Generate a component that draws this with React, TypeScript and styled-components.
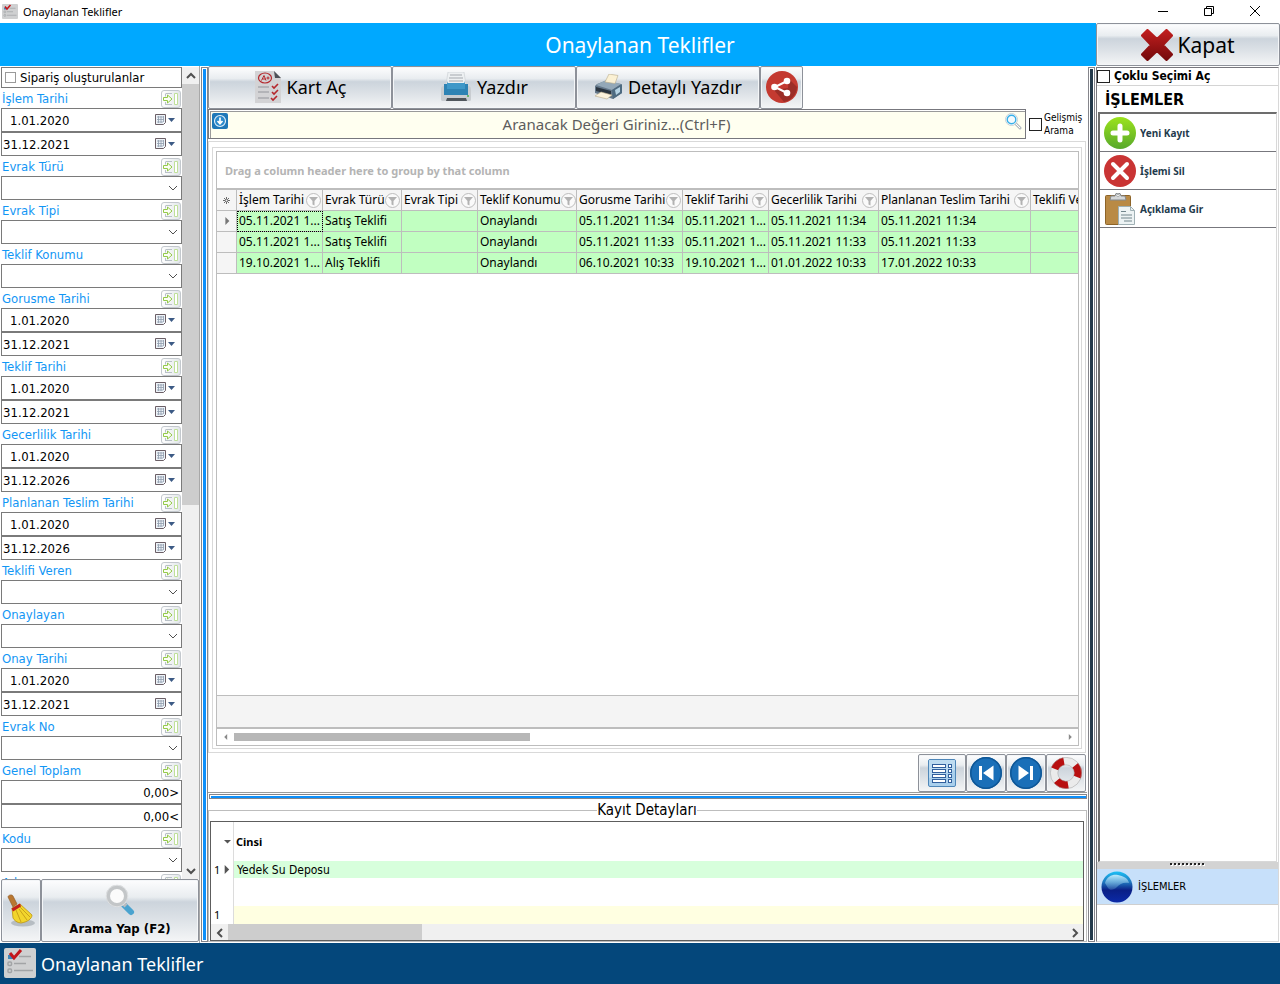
import React from 'react';
import styled, { createGlobalStyle, css } from 'styled-components';

const condensed = '"DejaVu Sans Condensed", "DejaVu Sans", Tahoma, sans-serif';
const noto = '"Noto Sans", "Open Sans", sans-serif';

const GlobalStyle = createGlobalStyle`
  *, *::before, *::after { box-sizing: border-box; }
  body { margin: 0; background: #fff; color: #000; font: 13px/16px ${condensed}; }
  button, input, select { font: inherit; color: inherit; margin: 0; }
  svg { display: block; flex: none; }
`;

const metal = css`
  border: 1px solid #8d9199;
  border-radius: 2px;
  background: linear-gradient(#fdfdfe 0, #e9edf0 28%, #ccd4dc 36%, #dde2e7 65%, #f4f5f6 100%);
  box-shadow: inset 0 0 0 1px #f4f6f8;
`;

/* ---------- shell ---------- */
const Window = styled.div`
  display: flex;
  flex-direction: column;
  height: 100vh;
  overflow: hidden;
`;
const TitleBar = styled.header`
  display: flex;
  align-items: center;
  flex: none;
  height: 23px;
  padding: 0 2px;
  gap: 5px;
  font: 11px/16px ${noto};
`;
const WindowTitle = styled.span`
  flex: 1;
`;
const CaptionRow = styled.div`
  display: flex;
`;
const CaptionButton = styled.button`
  display: grid;
  place-items: center;
  width: 46px;
  height: 20px;
  padding: 0 0 2px;
  border: 0;
  background: none;
`;
const Body = styled.div`
  display: flex;
  flex: 1;
  min-height: 0;
`;
const Left = styled.div`
  display: flex;
  flex-direction: column;
  flex: 1;
  min-width: 0;
`;
const Banner = styled.h1`
  flex: none;
  height: 43px;
  margin: 0;
  padding-left: 184px;
  background: #00a8ff;
  color: #fff;
  text-align: center;
  font: 21px/44px ${noto};
`;
const Columns = styled.div`
  display: flex;
  flex: 1;
  min-height: 0;
  padding-right: 1px;
`;
const StatusBar = styled.footer`
  display: flex;
  align-items: center;
  flex: none;
  gap: 5px;
  height: 41px;
  padding-left: 4px;
  background: #04477b;
  color: #fff;
  font: 18px/24px ${noto};
`;
const Splitter = styled.div<{ $tone: string; $flat?: boolean }>`
  flex: none;
  border: 1px solid #85858b;
  background: ${(p) => p.$tone};
  ${(p) => (p.$flat
    ? 'height: 5px; margin: 1px 0 0 1px; box-shadow: inset 1px 1px 0 #fff;'
    : 'width: 7px; margin: 1px 0 1px 1px; box-shadow: inset 0 0 0 1px #fff;')}
`;

/* ---------- filter column ---------- */
const FilterColumn = styled.aside`
  display: flex;
  flex-direction: column;
  flex: none;
  width: 200px;
  padding-top: 1px;
  border-right: 1px solid #a8a8a8;
`;
const FilterArea = styled.div`
  display: flex;
  flex: 1;
  min-height: 0;
`;
const FilterList = styled.div`
  flex: 1;
  min-width: 0;
  padding-left: 1px;
  overflow: hidden;
`;
const CheckLine = styled.label`
  display: flex;
  align-items: center;
  gap: 4px;
  height: 21px;
  padding-left: 3px;
  border: 1px solid #7a7a7a;
`;
const Tick = styled.input<{ $size: number; $edge: string }>`
  appearance: none;
  flex: none;
  width: ${(p) => p.$size}px;
  height: ${(p) => p.$size}px;
  border: 1px solid ${(p) => p.$edge};
  background: #fff;
`;
const FilterHead = styled.div`
  display: flex;
  align-items: center;
  justify-content: space-between;
  height: 20px;
  padding: 1px 1px 0;
  color: #1296f5;
`;
const ApplyButton = styled.button`
  width: 20px;
  height: 18px;
  padding: 0;
  border: 1px solid #c3c8cd;
  border-radius: 3px;
  background: linear-gradient(90deg, #fff, #e3e7ea);
`;
const FieldBox = styled.div`
  display: grid;
  grid-template-columns: minmax(0, 1fr) auto;
  align-items: center;
  height: 24px;
  border: 1px solid #7a7a7a;
  background: #fff;
`;
const FieldInput = styled.input<{ $indent?: boolean; $right?: boolean }>`
  grid-area: 1 / 1;
  width: 100%;
  height: 22px;
  padding: 0 2px 0 ${(p) => (p.$indent ? 8 : 1)}px;
  border: 0;
  outline: 0;
  background: none;
  text-align: ${(p) => (p.$right ? 'right' : 'left')};
`;
const PlainButton = styled.button`
  display: flex;
  padding: 0;
  border: 0;
  background: none;
`;
const CalendarButton = styled(PlainButton)`
  padding-right: 5px;
`;
const FieldSelect = styled.select`
  grid-area: 1 / 1 / 2 / 3;
  appearance: none;
  width: 100%;
  height: 22px;
  border: 0;
  outline: 0;
  background: none;
`;
const SelectArrow = styled.span`
  grid-area: 1 / 2;
  padding-right: 3px;
  pointer-events: none;
`;
const ScrollTrack = styled.div`
  display: flex;
  flex-direction: column;
  flex: none;
  width: 17px;
  background: #f0f0f0;
`;
const ScrollThumb = styled.div`
  flex: 0 1 421px;
  background: #cdcdcd;
`;
const ScrollArrow = styled.button`
  display: grid;
  place-items: center;
  flex: none;
  width: 17px;
  height: 17px;
  padding: 0;
  border: 0;
  background: none;
`;
const ScrollRest = styled.div`
  flex: 1;
`;
const SearchActions = styled.div`
  display: flex;
  flex: none;
  height: 64px;
  padding: 0 0 1px 1px;
`;
const ClearButton = styled.button`
  ${metal}
  display: grid;
  place-items: center;
  width: 40px;
  padding: 0;
`;
const RunButton = styled.button`
  ${metal}
  display: flex;
  flex-direction: column;
  align-items: center;
  justify-content: space-between;
  flex: 1;
  padding: 4px 0;
  font-weight: bold;
`;

/* ---------- centre ---------- */
const Centre = styled.main`
  display: flex;
  flex-direction: column;
  flex: 1;
  min-width: 0;
`;
const Toolbar = styled.div`
  display: flex;
  flex: none;
  height: 43px;
`;
const ToolButton = styled.button<{ $width: number }>`
  ${metal}
  display: flex;
  align-items: center;
  justify-content: center;
  gap: 5px;
  width: ${(p) => p.$width}px;
  padding: 0 0 2px;
  font: 18px/24px ${noto};
`;
const SearchRow = styled.div`
  display: flex;
  align-items: center;
  flex: none;
  height: 30px;
  padding-right: 5px;
`;
const SearchBox = styled.div`
  display: flex;
  align-items: flex-start;
  flex: 1;
  height: 30px;
  padding: 3px;
  border: 1px solid #77777d;
  background: #fffff0;
  box-shadow: inset 1px 1px 0 #fff, inset 2px 2px 0 #9a9a9a;
`;
const SearchInput = styled.input`
  flex: 1;
  min-width: 0;
  height: 22px;
  padding: 0;
  border: 0;
  outline: 0;
  background: none;
  text-align: center;
  font: 15px/22px ${noto};
  &::placeholder { color: #5d5d5d; opacity: 1; }
`;
const AdvancedLabel = styled.label`
  display: flex;
  align-items: center;
  gap: 2px;
  width: 56px;
  padding-left: 3px;
  font: 10px/13px ${condensed};
`;
const OuterFrame = styled.section`
  display: flex;
  flex: 1;
  min-height: 0;
  margin: 2px 1px 0 0;
  padding: 5px 3px 3px;
  border: 1px solid #d9d9d9;
`;
const InnerFrame = styled.div`
  display: flex;
  flex: 1;
  min-width: 0;
  padding: 3px 2px 2px 3px;
  border: 1px solid #d9d9d9;
`;
const GridFrame = styled.div`
  display: flex;
  flex-direction: column;
  flex: 1;
  min-width: 0;
  overflow: hidden;
  border: 1px solid #bdbdbd;
`;
const GroupPanel = styled.div`
  flex: none;
  height: 37px;
  padding-left: 8px;
  border-bottom: 1px solid #bdbdbd;
  color: #b4b4b4;
  font: bold 11px/38px ${noto};
`;
const GridBody = styled.div`
  flex: 1;
  min-height: 0;
  overflow: hidden;
`;
const OfferTable = styled.table`
  width: 924px;
  table-layout: fixed;
  border-spacing: 0;
  border-top: 1px solid #bdbdbd;
  font: 12px/20px ${noto};
  white-space: nowrap;
`;
const OfferHead = styled.th`
  height: 21px;
  padding: 0 1px 0 2px;
  overflow: hidden;
  border-right: 1px solid #bdbdbd;
  border-bottom: 1px solid #bdbdbd;
  background: #f5f5f5;
  font-weight: normal;
  text-align: left;
`;
const HeadInner = styled.div`
  display: flex;
  align-items: center;
  justify-content: space-between;
`;
const OfferCell = styled.td<{ $focus?: boolean }>`
  height: 21px;
  padding: 0 0 0 2px;
  overflow: hidden;
  border-right: 1px solid #bdbdbd;
  border-bottom: 1px solid #bdbdbd;
  background: #c1ffc1;
  ${(p) => p.$focus && 'outline: 1px dotted #000; outline-offset: -1px;'}
`;
const RowMark = styled.td`
  height: 21px;
  padding: 0 0 0 6px;
  border-right: 1px solid #bdbdbd;
  border-bottom: 1px solid #bdbdbd;
  background: #f5f5f5;
`;
const MarkHead = styled(OfferHead)`
  padding: 0 0 0 5px;
`;
const SummaryBand = styled.div`
  flex: none;
  height: 33px;
  border-top: 1px solid #bdbdbd;
  border-bottom: 1px solid #bdbdbd;
  background: #f4f4f4;
`;
const GridScroll = styled.div`
  display: flex;
  align-items: center;
  flex: none;
  height: 17px;
  border-top: 1px solid #bdbdbd;
`;
const GridThumb = styled.div`
  width: 296px;
  height: 8px;
  background: #b7b7b7;
`;
const NavRow = styled.nav`
  display: flex;
  justify-content: flex-end;
  flex: none;
  height: 40px;
  padding: 1px 1px 0 0;
  border-bottom: 1px solid #9b9b9b;
`;
const NavButton = styled.button<{ $width: number }>`
  ${metal}
  display: grid;
  place-items: center;
  width: ${(p) => p.$width}px;
  height: 38px;
  padding: 0;
`;
const Details = styled.fieldset`
  flex: none;
  min-width: 0;
  margin: 1px 0 1px;
  padding: 1px 2px 0 1px;
  border: 1px solid #bdbdbd;
`;
const DetailsTitle = styled.legend`
  margin: 0 auto;
  padding: 0;
  font-size: 15px;
  line-height: 20px;
`;
const DetailFrame = styled.div`
  height: 120px;
  border: 1px solid #5d5d5d;
`;
const DetailTable = styled.table`
  width: 100%;
  table-layout: fixed;
  border-spacing: 0;
  font-size: 12px;
  line-height: 16px;
`;
const DetailRow = styled.tr<{ $height: number; $fill?: string }>`
  height: ${(p) => p.$height}px;
  > td:last-child { background: ${(p) => p.$fill || '#fff'}; }
`;
const DetailMark = styled.td`
  padding: 0 2px 0 3px;
  border-right: 1px solid #dcdcdc;
  font: 11px/16px ${noto};
`;
const MarkInner = styled.div`
  display: flex;
  align-items: center;
  justify-content: space-between;
`;
const DetailHead = styled.th`
  padding: 0 2px;
  text-align: left;
  font: bold 11px/16px ${noto};
`;
const DetailCell = styled.td`
  padding: 0 3px;
`;
const DetailScroll = styled.div`
  display: flex;
  height: 16px;
  background: #f0f0f0;
`;
const DetailThumb = styled.div`
  width: 194px;
  background: #cdcdcd;
`;

/* ---------- operations panel ---------- */
const Right = styled.aside`
  display: flex;
  flex-direction: column;
  flex: none;
  width: 184px;
`;
const CloseButton = styled.button`
  ${metal}
  display: flex;
  align-items: center;
  justify-content: center;
  gap: 4px;
  flex: none;
  height: 43px;
  padding: 0;
  font: 21px/28px ${noto};
`;
const Panel = styled.div`
  display: flex;
  flex-direction: column;
  flex: 1;
  min-height: 0;
  margin: 1px 1px 1px 0;
  border: 1px solid #d8d8d8;
  border-top-color: #77777d;
  border-left: 1px solid #77777d;
`;
const MultiSelect = styled.label`
  display: flex;
  align-items: center;
  gap: 4px;
  flex: none;
  height: 17px;
  font: bold 12px/17px ${condensed};
`;
const PanelTitle = styled.h2`
  flex: none;
  height: 27px;
  margin: 0;
  padding-left: 8px;
  border-top: 1px solid #d4d4d4;
  font: bold 16px/27px ${condensed};
`;
const Operations = styled.ul`
  flex: 1;
  min-height: 0;
  margin: 0 1px 0 1px;
  padding: 0;
  border: 1px solid #d8d8d8;
  border-top: 2px solid #6d6d6d;
  border-left: 2px solid #6d6d6d;
  list-style: none;
`;
const Operation = styled.li`
  height: 38px;
  border-bottom: 1px solid #77777d;
`;
const OperationButton = styled.button`
  display: flex;
  align-items: center;
  gap: 4px;
  width: 100%;
  height: 37px;
  padding: 0 4px;
  border: 0;
  background: none;
  color: #1f3b4d;
  font: bold 10px/16px ${noto};
`;
const Grip = styled.div`
  display: grid;
  justify-content: center;
  flex: none;
  height: 7px;
  background: #d3d3d3;
`;
const GroupButton = styled.button`
  display: flex;
  align-items: center;
  gap: 5px;
  flex: none;
  height: 36px;
  padding: 0 4px;
  border: 0;
  border-bottom: 1px solid #cfcfcf;
  background: #c7e0fa;
  font: 11px/16px ${condensed};
`;
const PanelRest = styled.div`
  flex: none;
  height: 36px;
`;

/* ---------- drawings ---------- */
const ListIcon = ({ size }: { size: number }) => (
  <svg width={size} height={size} viewBox="0 0 32 32">
    <rect width="32" height="30" rx="2" fill="#cfd0d1" />
    <path d="M4 7h5v4H4z" fill="#3f86b8" />
    <g fill="none" stroke="#a2a4a6" strokeWidth="1.500">
      <path d="M15 8.500h12M10 15.500h12M10 22.500h19" />
      <rect x="4" y="14" width="3.500" height="3.500" rx="1" /><rect x="4" y="21" width="3.500" height="3.500" rx="1" />
    </g>
    <path d="M6 5l4 5 7-8" fill="none" stroke="#c4161c" strokeWidth="3" />
  </svg>
);
const ApplyIcon = () => (
  <svg width="18" height="16" viewBox="0 0 18 16">
    <path d="M4 2.500h6M4 13.500h6M3.500 2.500v3M3.500 11v3" stroke="#b9c1c7" fill="none" />
    <path d="M1.500 6.500h4V4L10 8l-4.500 4V9.500h-4z" fill="#fbfef4" stroke="#94c94a" />
    <path d="M12.500 2.500h3v11h-3z" fill="#fff" stroke="#bfe09a" />
  </svg>
);
const CalendarIcon = () => (
  <svg width="22" height="14" viewBox="0 0 22 14">
    <path d="M1.500 1.500h10v8l-2 2h-8z" fill="#eef3f8" stroke="#6b5f66" />
    <path d="M3 4h7M3 6.500h7M3 9h6M4.500 3v7M7 3v7M9.500 3v6" stroke="#8f9dad" strokeWidth=".8" />
    <path d="M14 5h7l-3.500 4z" fill="#3c5a85" />
  </svg>
);
const Chevron = ({ dir, size = 10, width = 1 }: { dir: 'up' | 'down' | 'left' | 'right'; size?: number; width?: number }) => {
  const d = { up: 'M1 7l4-4 4 4', down: 'M1 3l4 4 4-4', left: 'M7 1L3 5l4 4', right: 'M3 1l4 4-4 4' }[dir];
  return <svg width={size} height={size} viewBox="0 0 10 10"><path d={d} fill="none" stroke="#505050" strokeWidth={width} /></svg>;
};
const Triangle = ({ dir, color, size }: { dir: 'left' | 'right' | 'down'; color: string; size: number }) => {
  const d = { left: 'M7 0v10L2 5z', right: 'M3 0v10l5-5z', down: 'M0 3h10L5 8z' }[dir];
  return <svg width={size} height={size} viewBox="0 0 10 10"><path d={d} fill={color} /></svg>;
};
const FunnelIcon = () => (
  <svg width="15" height="15" viewBox="0 0 15 15">
    <circle cx="7.500" cy="7.500" r="7" fill="#fafafa" stroke="#bcbcbc" />
    <path d="M3 4h9L8.500 8v4.500l-2-1V8z" fill="#b2b2b2" />
  </svg>
);
const StarIcon = () => (
  <svg width="9" height="9" viewBox="0 0 9 9">
    <path d="M4.500 1v7M1 4.500h7M2 2l5 5M7 2L2 7" stroke="#6a6a6a" strokeWidth="1" />
    <circle cx="4.500" cy="4.500" r="1" fill="#f5f5f5" />
  </svg>
);
const BroomIcon = () => (
  <svg width="30" height="34" viewBox="0 0 30 34">
    <ellipse cx="17" cy="29" rx="12" ry="3.500" fill="#9aa1a8" opacity=".6" />
    <path d="M2 3c0-2 4-3 5-1l4 8-4 3z" fill="#b97731" stroke="#8a5420" strokeWidth=".6" />
    <path d="M6 14l8-4 12 11c0 4-5 7-11 8-4 0-7-3-8-5z" fill="#f2d52c" stroke="#bd9612" strokeWidth=".8" />
    <path d="M10 16l5 12M13 15l8 11M14 13l10 10" stroke="#c9a21a" fill="none" />
    <path d="M5.500 14.500l8.500-5 1 3-8 5z" fill="#c1201c" />
  </svg>
);
const MagnifierIcon = () => (
  <svg width="32" height="33" viewBox="0 0 32 33">
    <path d="M19 20l8 8" stroke="#4aa3cf" strokeWidth="6" strokeLinecap="round" />
    <path d="M18 18l4 4" stroke="#b8bcc0" strokeWidth="4" />
    <circle cx="13" cy="12" r="9" fill="#fbfbfb" stroke="#c3c6c8" strokeWidth="4" />
    <circle cx="13" cy="12" r="10.800" fill="none" stroke="#dfe1e3" strokeWidth="1" />
  </svg>
);
const GradeIcon = () => (
  <svg width="28" height="32" viewBox="0 0 28 32">
    <path d="M1 0h19l7 7v25H1z" fill="#d3d3d5" />
    <path d="M20 0l7 7h-6z" fill="#4d5157" />
    <ellipse cx="11" cy="7" rx="6.500" ry="5" fill="none" stroke="#b5272c" strokeWidth="1.200" />
    <path d="M7.500 9.500L10 4.500l2 5M8.500 8h3M12.500 7h3M14 5.500v3" stroke="#b5272c" fill="none" />
    <path d="M4 16h11M4 21h11M4 27h11" stroke="#a9abae" strokeWidth="1.400" />
    <path d="M18 15l2 2 4-4M18 21l2 2 4-4M17 27l2 2 4-4" stroke="#b5272c" strokeWidth="1.600" fill="none" />
  </svg>
);
const PrinterIcon = () => (
  <svg width="32" height="30" viewBox="0 0 32 30">
    <path d="M8 0h16l2 13H6z" fill="#edf0f2" stroke="#c8ccd0" strokeWidth=".6" />
    <path d="M10 3h12M9 6h14M9 9h14" stroke="#a3a8ad" strokeWidth="1.200" />
    <path d="M4 12h3l1-3v8h16V9l1 3h3v11H4z" fill="#2e83b4" />
    <path d="M7 11h18v6H7z" fill="#3f98c8" />
    <path d="M1 17c0-2 1-3 3-3v9h24v-9c2 0 3 1 3 3v10c0 2-1 2-2 2H3c-1 0-2 0-2-2z" fill="#c9cdd1" />
    <path d="M7 26h19l1 3H6z" fill="#50565c" /><circle cx="28" cy="24" r="1" fill="#4caf50" />
  </svg>
);
const DetailPrinterIcon = () => (
  <svg width="29" height="26" viewBox="0 0 29 26">
    <path d="M1 12l2-2 8-3 16 3 1 2v7l-9 6-18-6z" fill="#64788a" />
    <path d="M2 11l10-5 15 4-9 6z" fill="#93a8b8" />
    <path d="M11 8l4-8 9 1.500-3 8z" fill="#fbf1d4" stroke="#b8ab8a" strokeWidth=".6" />
    <path d="M18 16l10-6v9l-9 6z" fill="#4d6a80" /><path d="M21 16l5-3v5l-4 3z" fill="#b5d3e4" />
    <path d="M2 13l15 4v4L2 17z" fill="#2b3540" />
    <path d="M7 18l11 3-5 4-12-3z" fill="#fdf3dc" stroke="#b8ab8a" strokeWidth=".6" />
  </svg>
);
const ShareIcon = () => (
  <svg width="32" height="32" viewBox="0 0 32 32">
    <circle cx="16" cy="16" r="16" fill="#c43a31" />
    <path d="M23 8l8 8a16 16 0 0 1-13 15L8 19l14-2z" fill="#9c2d27" />
    <path d="M21 10L9 16l12 6" fill="none" stroke="#fff" strokeWidth="2" />
    <g fill="#fff"><circle cx="21" cy="10" r="3.300" /><circle cx="8.500" cy="16" r="3.300" /><circle cx="21" cy="22" r="3.300" /></g>
  </svg>
);
const DownloadIcon = () => (
  <svg width="16" height="16" viewBox="0 0 16 16">
    <rect width="16" height="16" rx="2" fill="#1f78b8" />
    <circle cx="8" cy="8" r="5.500" fill="#2b8acb" stroke="#e8f3fb" strokeWidth="1.100" />
    <path d="M8 4.500v6M5.500 8L8 10.700 10.500 8" fill="none" stroke="#fff" strokeWidth="1.700" />
  </svg>
);
const FindIcon = () => (
  <svg width="17" height="17" viewBox="0 0 17 17">
    <path d="M10.500 10.500l4.500 4.500" stroke="#b4bcc2" strokeWidth="3" strokeLinecap="round" />
    <path d="M11 11l4 4" stroke="#fff" strokeWidth="1" />
    <circle cx="6.500" cy="6.500" r="6" fill="#fff" stroke="#c8d0d5" strokeWidth="1" />
    <circle cx="6.500" cy="6.500" r="4.300" fill="#f2fafe" stroke="#37b0e8" strokeWidth="1.400" />
  </svg>
);
const FormIcon = () => (
  <svg width="30" height="30" viewBox="0 0 30 30">
    <rect x="1.500" y="1.500" width="27" height="27" rx="1.500" fill="#a9cfec" stroke="#4e86b8" />
    <path d="M2 2h26v10L2 20z" fill="#c8e1f3" opacity=".7" />
    <g fill="#fff" stroke="#315f9d" strokeWidth="1">
      {[6.5, 11.5, 16.5, 21.5].map((y) => <React.Fragment key={y}><rect x="5.500" y={y} width="13" height="3" /><rect x="21.500" y={y} width="3" height="3" /></React.Fragment>)}
    </g>
  </svg>
);
const SkipIcon = ({ forward }: { forward?: boolean }) => (
  <svg width="32" height="32" viewBox="1 1 32 32">
    <circle cx="17" cy="17" r="16" fill="#1a6fb8" /><circle cx="17" cy="17" r="15.200" fill="none" stroke="#0f5796" strokeWidth="1.500" />
    {forward
      ? <path d="M9.500 9.500v15L20 17zM21 10h3v14h-3z" fill="#fff" />
      : <path d="M24.500 9.500v15L14 17zM10 10h3v14h-3z" fill="#fff" />}
  </svg>
);
const LifebuoyIcon = () => (
  <svg width="32" height="32" viewBox="1 1 32 32">
    <circle cx="17" cy="17" r="12" fill="none" stroke="#ebebeb" strokeWidth="7.500" />
    <circle cx="17" cy="17" r="12" fill="none" stroke="#b80f10" strokeWidth="7.500" pathLength="6" strokeDasharray="1 1" transform="rotate(-40 17 17)" />
    <circle cx="17" cy="17" r="15.700" fill="none" stroke="#a0a0a0" strokeWidth=".5" />
    <circle cx="17" cy="17" r="8.200" fill="none" stroke="#a0a0a0" strokeWidth=".5" />
  </svg>
);
const CrossIcon = () => (
  <svg width="32" height="32" viewBox="0 0 32 32">
    <defs><linearGradient id="cross" x1="0" y1="0" x2="0" y2="1"><stop offset="0" stopColor="#c01e1e" /><stop offset="1" stopColor="#760a0c" /></linearGradient></defs>
    <path d="M6.500 1.500L16 10.500l9.500-9 5 5L21.500 16l9 9.500-5 5-9.500-9-9.500 9-5-5 9-9.500-9-9.500z" fill="url(#cross)" stroke="url(#cross)" strokeWidth="3" strokeLinejoin="round" />
  </svg>
);
const AddIcon = () => (
  <svg width="32" height="32" viewBox="0 0 32 32">
    <defs><linearGradient id="add" x1="0" y1="0" x2="0" y2="1"><stop offset="0" stopColor="#9be31c" /><stop offset="1" stopColor="#58a82c" /></linearGradient></defs>
    <circle cx="16" cy="16" r="16" fill="url(#add)" />
    <path d="M16 9v14M9 16h14" stroke="#fff" strokeWidth="5" strokeLinecap="round" />
  </svg>
);
const DeleteIcon = () => (
  <svg width="32" height="32" viewBox="0 0 32 32">
    <circle cx="16" cy="16" r="16" fill="#c93434" />
    <path d="M9 9l14 14M23 9L9 23" stroke="#fff" strokeWidth="4" strokeLinecap="round" />
  </svg>
);
const ClipboardIcon = () => (
  <svg width="32" height="32" viewBox="0 0 32 32">
    <rect x="1.500" y="2.500" width="25" height="29" rx="1" fill="#b98a45" stroke="#8d6429" />
    <path d="M7 3h4a3 3 0 0 1 6 0h4l1 4H6z" fill="#d4d7d9" stroke="#85898c" /><circle cx="14" cy="2.500" r="1.200" fill="#fff" stroke="#85898c" strokeWidth=".6" />
    <path d="M14.500 13.500h12l4 4v14h-16z" fill="#edf3f4" stroke="#9fb0b4" />
    <path d="M26.500 13.500v4h4" fill="none" stroke="#9fb0b4" />
    <path d="M17 18.500h5M17 22h11M17 25h11M20 28h8" stroke="#72868c" />
  </svg>
);
const BallIcon = () => (
  <svg width="32" height="32" viewBox="0 0 32 32">
    <defs>
      <linearGradient id="ball" x1="0" y1="0" x2="0" y2="1"><stop offset="0" stopColor="#1bc0f5" /><stop offset=".35" stopColor="#1f74bd" /><stop offset=".6" stopColor="#0a1f86" /><stop offset="1" stopColor="#0b2aa8" /></linearGradient>
      <linearGradient id="shine" x1="0" y1="0" x2="0" y2="1"><stop offset="0" stopColor="#d9f4ff" stopOpacity=".85" /><stop offset="1" stopColor="#6fb5e0" stopOpacity=".25" /></linearGradient>
    </defs>
    <circle cx="16" cy="16" r="15.500" fill="url(#ball)" />
    <path d="M4 12C6 5 12 3 17 4s10 3 11 8c-6-1-9 1-12 4s-7 4-9 1z" fill="url(#shine)" />
  </svg>
);
const GripDots = () => (
  <svg width="36" height="4" viewBox="0 0 36 4">
    {[0, 4, 8, 12, 16, 20, 24, 28, 32].map((x) => <g key={x}><rect x={x + 1} y="2" width="2" height="2" fill="#fff" /><rect x={x} y="1" width="2" height="2" fill="#222" /></g>)}
  </svg>
);

/* ---------- data ---------- */
type Filter = { name: string; kind: 'date' | 'select' | 'amount'; values?: string[] };
const filters: Filter[] = [
  { name: 'İşlem Tarihi', kind: 'date', values: ['1.01.2020', '31.12.2021'] },
  { name: 'Evrak Türü', kind: 'select' },
  { name: 'Evrak Tipi', kind: 'select' },
  { name: 'Teklif Konumu', kind: 'select' },
  { name: 'Gorusme Tarihi', kind: 'date', values: ['1.01.2020', '31.12.2021'] },
  { name: 'Teklif Tarihi', kind: 'date', values: ['1.01.2020', '31.12.2021'] },
  { name: 'Gecerlilik Tarihi', kind: 'date', values: ['1.01.2020', '31.12.2026'] },
  { name: 'Planlanan Teslim Tarihi', kind: 'date', values: ['1.01.2020', '31.12.2026'] },
  { name: 'Teklifi Veren', kind: 'select' },
  { name: 'Onaylayan', kind: 'select' },
  { name: 'Onay Tarihi', kind: 'date', values: ['1.01.2020', '31.12.2021'] },
  { name: 'Evrak No', kind: 'select' },
  { name: 'Genel Toplam', kind: 'amount', values: ['0,00>', '0,00<'] },
  { name: 'Kodu', kind: 'select' },
  { name: 'Adı', kind: 'select' },
];
const columns: [string, number][] = [
  ['İşlem Tarihi', 86], ['Evrak Türü', 79], ['Evrak Tipi', 76], ['Teklif Konumu', 99], ['Gorusme Tarihi', 106],
  ['Teklif Tarihi', 86], ['Gecerlilik Tarihi', 110], ['Planlanan Teslim Tarihi', 152], ['Teklifi Veren', 110],
];
const offers = [
  ['05.11.2021 1...', 'Satış Teklifi', '', 'Onaylandı', '05.11.2021 11:34', '05.11.2021 1...', '05.11.2021 11:34', '05.11.2021 11:34', ''],
  ['05.11.2021 1...', 'Satış Teklifi', '', 'Onaylandı', '05.11.2021 11:33', '05.11.2021 1...', '05.11.2021 11:33', '05.11.2021 11:33', ''],
  ['19.10.2021 1...', 'Alış Teklifi', '', 'Onaylandı', '06.10.2021 10:33', '19.10.2021 1...', '01.01.2022 10:33', '17.01.2022 10:33', ''],
];

const FilterGroup = ({ name, kind, values = [] }: Filter) => (
  <div>
    <FilterHead>
      <label htmlFor={`${name}-0`}>{name}</label>
      <ApplyButton aria-label={`${name} uygula`}><ApplyIcon /></ApplyButton>
    </FilterHead>
    {kind === 'select' && (
      <FieldBox>
        <FieldSelect id={`${name}-0`}><option /></FieldSelect>
        <SelectArrow><Chevron dir="down" /></SelectArrow>
      </FieldBox>
    )}
    {kind === 'date' && values.map((v, i) => (
      <FieldBox key={i}>
        <FieldInput id={`${name}-${i}`} aria-label={name} defaultValue={v} $indent={i === 0} />
        <CalendarButton aria-label="Takvim"><CalendarIcon /></CalendarButton>
      </FieldBox>
    ))}
    {kind === 'amount' && values.map((v, i) => (
      <FieldBox key={i}>
        <FieldInput id={`${name}-${i}`} aria-label={name} defaultValue={v} $right />
      </FieldBox>
    ))}
  </div>
);

const CaptionButtons = () => (
  <CaptionRow>
    <CaptionButton aria-label="Simge durumuna küçült"><svg width="10" height="10" viewBox="0 0 10 10"><path d="M0 5.500h10" stroke="#000" /></svg></CaptionButton>
    <CaptionButton aria-label="Geri yükle"><svg width="10" height="10" viewBox="0 0 10 10"><path d="M.5 2.500h7v7h-7zM2.500 2.500v-2h7v7h-2" fill="none" stroke="#000" /></svg></CaptionButton>
    <CaptionButton aria-label="Kapat"><svg width="10" height="10" viewBox="0 0 10 10"><path d="M0 0l10 10M10 0L0 10" stroke="#000" /></svg></CaptionButton>
  </CaptionRow>
);

export default function App() {
  return (
    <Window>
      <GlobalStyle />
      <TitleBar>
        <ListIcon size={16} />
        <WindowTitle>Onaylanan Teklifler</WindowTitle>
        <CaptionButtons />
      </TitleBar>
      <Body>
        <Left>
          <Banner>Onaylanan Teklifler</Banner>
          <Columns>
            <FilterColumn>
              <FilterArea>
                <FilterList>
                  <CheckLine><Tick type="checkbox" $size={11} $edge="#9a9a9a" />Sipariş oluşturulanlar</CheckLine>
                  {filters.map((f) => <FilterGroup key={f.name} {...f} />)}
                </FilterList>
                <ScrollTrack>
                  <ScrollArrow aria-label="Yukarı"><Chevron dir="up" width={2} /></ScrollArrow>
                  <ScrollThumb />
                  <ScrollRest />
                  <ScrollArrow aria-label="Aşağı"><Chevron dir="down" width={2} /></ScrollArrow>
                </ScrollTrack>
              </FilterArea>
              <SearchActions>
                <ClearButton aria-label="Temizle"><BroomIcon /></ClearButton>
                <RunButton><MagnifierIcon />Arama Yap (F2)</RunButton>
              </SearchActions>
            </FilterColumn>
            <Splitter $tone="#0d8ffa" />
            <Centre>
              <Toolbar>
                <ToolButton $width={184}><GradeIcon />Kart Aç</ToolButton>
                <ToolButton $width={184}><PrinterIcon />Yazdır</ToolButton>
                <ToolButton $width={184}><DetailPrinterIcon />Detaylı Yazdır</ToolButton>
                <ToolButton $width={43} aria-label="Paylaş"><ShareIcon /></ToolButton>
              </Toolbar>
              <SearchRow>
                <SearchBox>
                  <PlainButton aria-label="Seçenekler"><DownloadIcon /></PlainButton>
                  <SearchInput aria-label="Ara" placeholder="Aranacak Değeri Giriniz...(Ctrl+F)" />
                  <PlainButton aria-label="Bul"><FindIcon /></PlainButton>
                </SearchBox>
                <AdvancedLabel><Tick type="checkbox" $size={13} $edge="#222" />Gelişmiş Arama</AdvancedLabel>
              </SearchRow>
              <OuterFrame>
                <InnerFrame>
                  <GridFrame>
                    <GroupPanel>Drag a column header here to group by that column</GroupPanel>
                    <GridBody>
                      <OfferTable>
                        <colgroup>
                          <col width={20} />
                          {columns.map(([name, w]) => <col key={name} width={w} />)}
                        </colgroup>
                        <thead>
                          <tr>
                            <MarkHead aria-label="Satır"><StarIcon /></MarkHead>
                            {columns.map(([name]) => (
                              <OfferHead key={name}>
                                <HeadInner>{name}<PlainButton aria-label={`${name} filtre`}><FunnelIcon /></PlainButton></HeadInner>
                              </OfferHead>
                            ))}
                          </tr>
                        </thead>
                        <tbody>
                          {offers.map((row, r) => (
                            <tr key={r}>
                              <RowMark>{r === 0 && <Triangle dir="right" color="#777" size={8} />}</RowMark>
                              {row.map((text, c) => <OfferCell key={c} $focus={r === 0 && c === 0}>{text}</OfferCell>)}
                            </tr>
                          ))}
                        </tbody>
                      </OfferTable>
                    </GridBody>
                    <SummaryBand />
                    <GridScroll>
                      <ScrollArrow aria-label="Sola"><Triangle dir="left" color="#8a8a8a" size={6} /></ScrollArrow>
                      <GridThumb />
                      <ScrollRest />
                      <ScrollArrow aria-label="Sağa"><Triangle dir="right" color="#8a8a8a" size={6} /></ScrollArrow>
                    </GridScroll>
                  </GridFrame>
                </InnerFrame>
              </OuterFrame>
              <NavRow>
                <NavButton $width={48} aria-label="Form"><FormIcon /></NavButton>
                <NavButton $width={40} aria-label="İlk"><SkipIcon /></NavButton>
                <NavButton $width={40} aria-label="Son"><SkipIcon forward /></NavButton>
                <NavButton $width={40} aria-label="Yardım"><LifebuoyIcon /></NavButton>
              </NavRow>
              <Splitter $tone="#0d8ffa" $flat />
              <Details>
                <DetailsTitle>Kayıt Detayları</DetailsTitle>
                <DetailFrame>
                  <DetailTable>
                    <colgroup><col width={23} /><col /></colgroup>
                    <thead>
                      <DetailRow $height={39}>
                        <DetailMark><MarkInner><span /><Triangle dir="down" color="#555" size={7} /></MarkInner></DetailMark>
                        <DetailHead>Cinsi</DetailHead>
                      </DetailRow>
                    </thead>
                    <tbody>
                      <DetailRow $height={17} $fill="#d7ffdc">
                        <DetailMark><MarkInner>1<Triangle dir="right" color="#555" size={9} /></MarkInner></DetailMark>
                        <DetailCell>Yedek Su Deposu</DetailCell>
                      </DetailRow>
                      <DetailRow $height={28}><DetailMark /><DetailCell /></DetailRow>
                    </tbody>
                    <tfoot>
                      <DetailRow $height={18} $fill="#ffffe1"><DetailMark>1</DetailMark><DetailCell /></DetailRow>
                    </tfoot>
                  </DetailTable>
                  <DetailScroll>
                    <ScrollArrow aria-label="Sola"><Chevron dir="left" width={2} /></ScrollArrow>
                    <DetailThumb />
                    <ScrollRest />
                    <ScrollArrow aria-label="Sağa"><Chevron dir="right" width={2} /></ScrollArrow>
                  </DetailScroll>
                </DetailFrame>
              </Details>
            </Centre>
            <Splitter $tone="#243a4b" />
          </Columns>
        </Left>
        <Right>
          <CloseButton><CrossIcon />Kapat</CloseButton>
          <Panel>
            <MultiSelect><Tick type="checkbox" $size={13} $edge="#222" />Çoklu Seçimi Aç</MultiSelect>
            <PanelTitle>İŞLEMLER</PanelTitle>
            <Operations>
              <Operation><OperationButton><AddIcon />Yeni Kayıt</OperationButton></Operation>
              <Operation><OperationButton><DeleteIcon />İşlemi Sil</OperationButton></Operation>
              <Operation><OperationButton><ClipboardIcon />Açıklama Gir</OperationButton></Operation>
            </Operations>
            <Grip><GripDots /></Grip>
            <GroupButton><BallIcon />İŞLEMLER</GroupButton>
            <PanelRest />
          </Panel>
        </Right>
      </Body>
      <StatusBar><ListIcon size={32} />Onaylanan Teklifler</StatusBar>
    </Window>
  );
}
